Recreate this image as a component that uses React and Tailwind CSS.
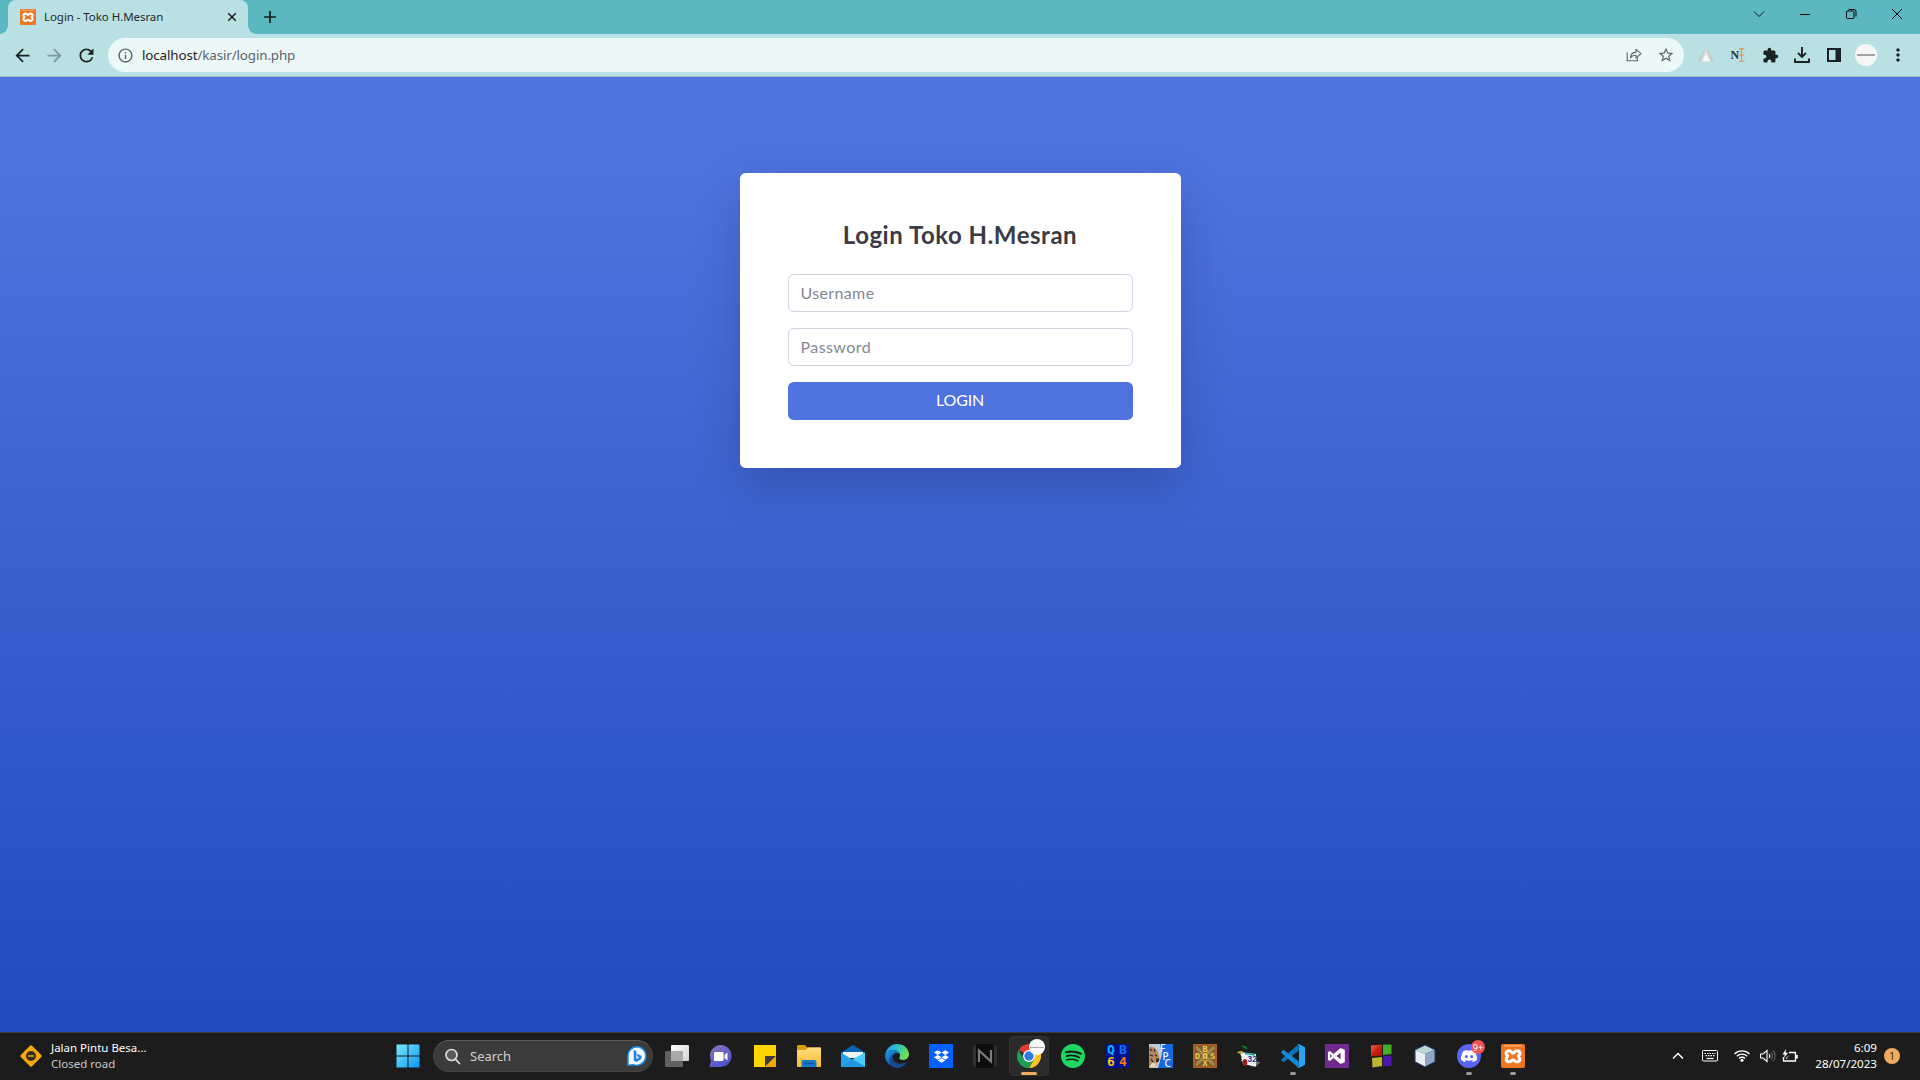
import React from "react";
import {
  MdArrowBack,
  MdArrowForward,
  MdRefresh,
  MdInfoOutline,
  MdStarBorder,
  MdExtension,
  MdMoreVert,
} from "react-icons/md";
import { SiDiscord, SiDropbox, SiSpotify } from "react-icons/si";

function Xampp({ size }) {
  return (
    <svg width={size} height={size} viewBox="0 0 24 24">
      <rect x="0" y="0" width="24" height="24" rx="2" fill="#ed7623" />
      <rect x="3" y="1.2" width="18" height="1.3" rx="0.6" fill="#fbb07a" />
      <path
        d="M8.200 6.700c-3.300 0-4.200 3-1.500 5.300-2.700 2.500-1.800 5.800 1.500 5.800 2.200 0 2.300-1.800 3.800-1.800s1.600 1.800 3.800 1.800c3.300 0 4.200-3.300 1.500-5.800 2.700-2.300 1.800-5.300-1.500-5.300-2.200 0-2.300 2.300-3.800 2.300s-1.600-2.300-3.800-2.300Z"
        fill="none"
        stroke="#fff"
        strokeWidth="3.100"
        strokeLinejoin="round"
      />
    </svg>
  );
}

function TitleBar() {
  return (
    <div className="flex h-[34px] items-stretch bg-[#5bb8c1] text-[#1b1b1b]">
      <div className="relative ml-2 flex w-60 items-center rounded-t-lg bg-[#b9e1e4] pl-3 pr-2">
        <span className="absolute -left-2 bottom-0 h-2 w-2 bg-[radial-gradient(circle_at_0_0,transparent_7.5px,#b9e1e4_8px)]" />
        <span className="absolute -right-2 bottom-0 h-2 w-2 bg-[radial-gradient(circle_at_100%_0,transparent_7.5px,#b9e1e4_8px)]" />
        <Xampp size={16} />
        <span className="ml-2 flex-1 whitespace-nowrap text-[11.5px] leading-4 tracking-[-0.06px] text-[#1f2a2c]">
          Login - Toko H.Mesran
        </span>
        <svg width="16" height="16" viewBox="0 0 16 16">
          <path d="M4.200 4.200l7.600 7.600M11.800 4.200l-7.600 7.600" stroke="currentColor" strokeWidth="1.500" />
        </svg>
      </div>
      <div className="flex w-[44px] items-center justify-center">
        <svg width="12" height="12" viewBox="0 0 12 12">
          <path d="M6 0v12M0 6h12" stroke="currentColor" strokeWidth="1.700" />
        </svg>
      </div>
      <div className="ml-auto flex h-7 text-black">
        <div className="flex w-[46px] items-center justify-center">
          <svg width="12" height="8" viewBox="0 0 12 8">
            <path d="M1 1.500l5 5 5-5" fill="none" stroke="currentColor" strokeWidth="0.900" />
          </svg>
        </div>
        <div className="flex w-[46px] items-center justify-center">
          <svg width="10" height="2" viewBox="0 0 10 2">
            <path d="M0 1.500h10" stroke="currentColor" />
          </svg>
        </div>
        <div className="flex w-[46px] items-center justify-center">
          <svg width="12" height="12" viewBox="0 0 12 12" fill="none" stroke="currentColor">
            <rect x="1.500" y="3" width="7.500" height="7.500" rx="1" />
            <path d="M3.500 1.500h5.500a2 2 0 0 1 2 2v5" />
          </svg>
        </div>
        <div className="flex w-[46px] items-center justify-center">
          <svg width="12" height="12" viewBox="0 0 12 12">
            <path d="M1 1l10 10M11 1L1 11" stroke="currentColor" strokeWidth="1" />
          </svg>
        </div>
      </div>
    </div>
  );
}

function Slot({ children }) {
  return <div className="flex w-8 shrink-0 items-center justify-center">{children}</div>;
}

function Toolbar() {
  return (
    <div className="flex h-[43px] items-center border-b border-[#9db9bd] bg-[#b9e1e4] px-1.5 text-[#1d2224]">
      <Slot><MdArrowBack size={21} /></Slot>
      <Slot><MdArrowForward size={21} className="text-[#7b979b]" /></Slot>
      <Slot><MdRefresh size={21} /></Slot>
      <div className="ml-1.5 mr-1.5 flex h-[34px] flex-1 items-center rounded-full bg-[#ecf8f8] pl-[9px] pr-0.5 text-[#5b6467]">
        <MdInfoOutline size={17} />
        <span className="ml-2 flex-1 whitespace-nowrap text-[13.4px] leading-5 tracking-[-0.13px]">
          <span className="text-[#1d2224]">localhost</span>/kasir/login.php
        </span>
        <Slot>
          <svg width="16" height="16" viewBox="0 0 16 16" fill="none" stroke="currentColor" strokeWidth="1.100">
            <path d="M1.200 5.200v8.600h10.300v-3.200" />
            <path d="M4.500 10.800c.3-3.700 2.400-5.500 5.500-5.700V2.300l5 4.400-5 4.400V8.300c-2.400 0-4.200.6-5.500 2.500Z" strokeLinejoin="round" />
          </svg>
        </Slot>
        <Slot><MdStarBorder size={18} /></Slot>
      </div>
      <Slot>
        <svg width="16" height="16" viewBox="0 0 16 16">
          <path d="M6 2.500h4L16 14.500H0Z" fill="#c5cbcd" />
          <path d="M8 5l4 9.500H4Z" fill="#f6f8f8" />
          <path d="M7.900 2l-4.500 12.500M8.100 2l4.500 12.500" stroke="#dde3e4" strokeWidth="1" />
        </svg>
      </Slot>
      <Slot>
        <svg width="16" height="16" viewBox="0 0 16 16">
          <text x="0.500" y="12" fontFamily="Liberation Serif" fontWeight="700" fontSize="12" fill="#263438">N</text>
          <path d="M9 1.500c1.500 0 2.500.4 2.500 1.500v10c0 1.100-1 1.500-2.500 1.500M14.500 1.500c-1.700 0-3 .4-3 1.500M14.500 14.500c-1.700 0-3-.4-3-1.500M9.500 8h4" fill="none" stroke="#e79a57" strokeWidth="1.300" />
        </svg>
      </Slot>
      <Slot><MdExtension size={17} /></Slot>
      <Slot>
        <svg width="16" height="16" viewBox="0 0 16 16" fill="none" stroke="currentColor" strokeWidth="1.900">
          <path d="M8 0v9.500M4 6l4 4 4-4M1 11.500V15h14v-3.500" />
        </svg>
      </Slot>
      <Slot>
        <svg width="14" height="14" viewBox="0 0 14 14">
          <rect x="1" y="1" width="12" height="12" fill="none" stroke="currentColor" strokeWidth="2" />
          <rect x="8.500" y="1" width="5" height="12" fill="currentColor" />
        </svg>
      </Slot>
      <Slot>
        <div className="flex h-[22px] w-[22px] items-center justify-center rounded-full bg-[#f7f6f7]">
          <div className="h-0.5 w-[18px] bg-[#a3a3a6]" />
        </div>
      </Slot>
      <Slot><MdMoreVert size={20} /></Slot>
    </div>
  );
}

function LoginPage() {
  return (
    <main className="flex flex-1 items-start justify-center bg-[linear-gradient(180deg,#4e73df_10%,#224abe_100%)] pt-24 font-['Lato',sans-serif]">
      <div className="w-[441px] rounded-[5.6px] bg-white p-12 shadow-[0_16px_48px_rgba(0,0,0,0.175)]">
        <h1 className="mb-[26px] whitespace-nowrap text-center text-[24px] font-bold leading-[27px] tracking-[0.52px] text-[#3a3b45]">
          Login Toko H.Mesran
        </h1>
        <div className="flex flex-col gap-4 text-base leading-6">
          <input
            type="text"
            placeholder="Username"
            className="h-[38px] rounded-[5.6px] border border-[#d1d3e2] px-3 pb-0.5 tracking-[0.36px] placeholder:text-[#858796]"
          />
          <input
            type="password"
            placeholder="Password"
            className="h-[38px] rounded-[5.6px] border border-[#d1d3e2] px-3 pb-0.5 tracking-[0.42px] placeholder:text-[#858796]"
          />
          <button className="h-[38px] rounded-[5.6px] bg-[#4e73df] pb-0.5 tracking-[-0.2px] text-white">LOGIN</button>
        </div>
      </div>
    </main>
  );
}

function Cell({ children, active, running }) {
  return (
    <div className="relative flex h-[47px] w-11 shrink-0 items-center justify-center pb-px">
      {active && (
        <div className="absolute left-0.5 top-[3px] h-10 w-10 rounded border border-[#343434] bg-[#2b2b2b]" />
      )}
      <div className="relative flex">{children}</div>
      {active && <div className="absolute bottom-[5px] left-3.5 h-[3px] w-4 rounded-full bg-[#eeac5c]" />}
      {running && <div className="absolute bottom-[5px] left-[19px] h-[3px] w-1.5 rounded-full bg-[#9a9a9a]" />}
    </div>
  );
}

function Icon({ children }) {
  return <svg className="overflow-visible" width="24" height="24" viewBox="0 0 24 24">{children}</svg>;
}

function Windows() {
  return (
    <Icon>
      <defs>
        <linearGradient id="win" x1="0" y1="0" x2="1" y2="1">
          <stop offset="0" stopColor="#7beaff" />
          <stop offset="1" stopColor="#0d97f4" />
        </linearGradient>
      </defs>
      <path d="M.5.5h11v11H.5zM12.500.5h11v11h-11zM.5 12.500h11v11H.5zM12.500 12.500h11v11h-11z" fill="url(#win)" />
    </Icon>
  );
}

function TaskView() {
  return (
    <Icon>
      <defs>
        <linearGradient id="tv" x1="0" y1="0" x2="1" y2="1">
          <stop offset="0" stopColor="#fff" />
          <stop offset="1" stopColor="#d3d3d3" />
        </linearGradient>
      </defs>
      <rect x="6" y="1" width="18" height="16" rx="1" fill="url(#tv)" />
      <rect x="0" y="7" width="18" height="16" rx="1" fill="#616161" />
      <path d="M6 7h12v10H6z" fill="#a9a9a9" />
    </Icon>
  );
}

function Chat() {
  return (
    <Icon>
      <defs>
        <linearGradient id="chat" x1="0" y1="0" x2="0.600" y2="1">
          <stop offset="0" stopColor="#a56cb4" />
          <stop offset="0.400" stopColor="#6f68c4" />
          <stop offset="1" stopColor="#4e52c9" />
        </linearGradient>
      </defs>
      <path d="M12 1a11 11 0 1 1-1 22H.5l1.500-6.200A11 11 0 0 1 12 1Z" fill="url(#chat)" />
      <rect x="5" y="8" width="9.500" height="9" rx="1" fill="#fff" />
      <path d="M15.500 11l3-2.500v8l-3-2.500z" fill="#fff" />
    </Icon>
  );
}

function StickyNotes() {
  return (
    <Icon>
      <path d="M1 1h22v22H1z" fill="#ffd500" />
      <path d="M12 12h11L12 23z" fill="#3c3c41" />
      <path d="M23 12v11H12z" fill="#eeaa00" />
    </Icon>
  );
}

function Explorer() {
  return (
    <Icon>
      <defs>
        <linearGradient id="fold" x1="0" y1="0" x2="0" y2="1">
          <stop offset="0" stopColor="#ffdd7e" />
          <stop offset="1" stopColor="#f9b92d" />
        </linearGradient>
      </defs>
      <path d="M0 2a1 1 0 0 1 1-1h7l2.500 2.500H24V10H0z" fill="#d99a09" />
      <path d="M0 6h8.500L11 3.500h12a1 1 0 0 1 1 1V22a1 1 0 0 1-1 1H1a1 1 0 0 1-1-1z" fill="url(#fold)" />
      <path d="M4.500 23v-5a2 2 0 0 1 2-2h11a2 2 0 0 1 2 2v5z" fill="#157bcc" />
      <path d="M7 19.500h10" stroke="#0c5698" strokeWidth="1.500" />
    </Icon>
  );
}

function Mail() {
  return (
    <Icon>
      <path d="M0 8.500 12 1l12 7.500V12H0z" fill="#0b62b0" />
      <path d="M2 8h20v6H2z" fill="#f0f1f2" />
      <path d="M0 8.500 12 16l12-7.500V22a1 1 0 0 1-1 1H1a1 1 0 0 1-1-1z" fill="#24a1e8" />
      <path d="M24 8.500V22.500L11 15.400z" fill="#49cdf8" />
      <path d="M0 22.500 12 15.500l12 7z" fill="#2293e0" />
    </Icon>
  );
}

function Edge() {
  return (
    <Icon>
      <defs>
        <linearGradient id="eg" x1="0" y1="0" x2="1" y2="0.300">
          <stop offset="0.200" stopColor="#28a8df" />
          <stop offset="0.600" stopColor="#35c6b8" />
          <stop offset="1" stopColor="#72e04b" />
        </linearGradient>
        <linearGradient id="eb" x1="0" y1="0" x2="0.700" y2="1">
          <stop offset="0" stopColor="#1c94dc" />
          <stop offset="1" stopColor="#0c57a4" />
        </linearGradient>
      </defs>
      <path d="M.3 10.500C1.200 4.300 6 0 12 0c7 0 12 5 12 10.300 0 3.300-2.500 5.700-5.800 5.700-2.500 0-4-.9-4-1.900 0-.7.8-1 .8-2.700C15 8.600 12.300 6 8.800 6 4.500 6 1.200 8.200.3 10.500Z" fill="url(#eg)" />
      <path d="M0 12C0 8.500 4 6 8.600 6c3.400 0 6.200 2.200 6.400 5-1-1.500-2.400-2-3.600-2-2.800 0-4.400 2.500-4.400 5.200 0 4.800 4.500 7.800 8.500 8.500A12 12 0 0 1 0 12Z" fill="url(#eb)" />
      <path d="M9.200 10.200c-3 3.300-1 8.300 4 9.300 3.300.7 6.400-.3 8.800-1.800-1.800 3.400-5.500 6.300-10 6.300-5 0-7.800-4-7.500-8 .3-3 2-5.100 4.700-5.800Z" fill="#14488f" />
    </Icon>
  );
}

function Dropbox() {
  return (
    <div className="flex h-6 w-6 items-center justify-center bg-[#0061fe] text-white">
      <SiDropbox size={15} />
    </div>
  );
}

function NIcon() {
  return (
    <Icon>
      <rect x="0" y="1" width="24" height="22" rx="3" fill="#303030" />
      <rect x="3" y="0" width="18" height="24" rx="1" fill="#0e0e0e" />
      <path d="M6 18V6.500L18 17.500V6" fill="none" stroke="#7c7c7c" strokeWidth="2.200" />
    </Icon>
  );
}

function Chrome() {
  return (
    <div className="relative">
      <Icon>
        <path d="M12 12 1.600 6A12 12 0 0 1 22.400 6z" fill="#e33b2e" />
        <path d="M12 6h10.400A12 12 0 0 1 12 24l5.200-9z" fill="#fcc31e" />
        <path d="M12 24A12 12 0 0 1 1.600 6l5.200 9L12 18l5.200-3z" fill="#1ea052" />
        <circle cx="12" cy="12" r="6" fill="#fff" />
        <circle cx="12" cy="12" r="4.700" fill="#2f7ce8" />
      </Icon>
      <div className="absolute -right-1 -top-[5px] flex h-4 w-4 items-center justify-center rounded-full bg-[#faf9fa]">
        <div className="h-px w-3.5 bg-[#aaaaaa]" />
      </div>
    </div>
  );
}

function Qb64() {
  return (
    <div className="grid h-6 w-6 grid-cols-2 grid-rows-2 place-items-center bg-[#00108c] font-['DejaVu_Sans_Mono',monospace] text-[13px] font-bold leading-[12px]">
      <span className="text-[#0ab4ff]">Q</span>
      <span className="text-[#0872f4]">B</span>
      <span className="text-[#ffbe0a]">6</span>
      <span className="text-[#ff7a0a]">4</span>
    </div>
  );
}

function Fpc() {
  return (
    <Icon>
      <rect width="24" height="24" fill="#1569e0" />
      <path d="M0 0h11l2 10-4 14H0z" fill="#c2cbd5" />
      <path d="M0 3c4-1 7 1 8.500 4.500L10.500 13 8 21l-4 3H0z" fill="#b58a60" />
      <path d="M1 5l2 2M5 5l1 3M1 11l3 1M2 15l2 3M6 11l2 1" stroke="#493525" strokeWidth="1.400" />
      <path d="M7.500 14l3 1-1.200 3H7z" fill="#33231d" />
      <path d="M3 19l5 .5-3 4H0z" fill="#eadbcb" />
      <g fontFamily="Noto Sans" fontSize="10" fontWeight="500" fill="#f5faff">
        <text x="11" y="8">F</text>
        <text x="13.500" y="15.500">P</text>
        <text x="15.500" y="23">C</text>
      </g>
    </Icon>
  );
}

function DosBox() {
  return (
    <Icon>
      <rect width="24" height="24" fill="#98511c" />
      <rect x="2.500" y="2.500" width="19" height="19" fill="#756039" />
      <path d="M3 3l18 18M21 3L3 21" stroke="#a68849" strokeWidth="3" />
      <rect x="1" y="1" width="22" height="22" fill="none" stroke="#b8692a" strokeWidth="1" />
      <g fontFamily="Liberation Mono" fontWeight="700" fontSize="8.500" fill="#f3cd43" textAnchor="middle">
        <text x="12" y="8">B</text>
        <text x="4.500" y="14.800">D</text>
        <text x="12" y="14.800">O</text>
        <text x="19.500" y="14.800">S</text>
        <text x="12" y="21.800">X</text>
      </g>
    </Icon>
  );
}

function Borland() {
  return (
    <Icon>
      <path d="M16 17l7.500 1-5 5-6-1z" fill="#68696b" />
      <path d="M3 8l16 2v12.500L6 20z" fill="#eef0f2" />
      <path d="M8 9.500l10 1.500" stroke="#13a6a6" strokeWidth="1.600" />
      <path d="M4 1.500l5 .5 2 3-4-.5z" fill="#147226" />
      <path d="M0 9c1.500-2 4-2.500 6-1.500L4.500 10z" fill="#b0aa20" />
      <ellipse cx="8" cy="18.500" rx="2.300" ry="3.500" fill="#a6151c" />
      <text x="10.500" y="18" fontFamily="Liberation Sans" fontSize="8.500" fontWeight="700" fill="#2430a0">32</text>
      <path d="M4.500 12v5M19 13v7" stroke="#9b9b9b" strokeDasharray="1 1" />
    </Icon>
  );
}

function VsCode() {
  return (
    <Icon>
      <path d="M17.500 0 0 15.500 1.300 17.600 3 18 18 6.500z" fill="#0f70b8" />
      <path d="M17.500 24 0 8.500 1.300 6.300 3 6 18 17.500z" fill="#1588d2" />
      <path d="M17.500 0 24 3v18l-6.500 3-1-1.200c1 .5 1.500 0 1.500-1V2.200c0-1-.5-1.500-1.500-1z" fill="#27a4ee" />
    </Icon>
  );
}

function VisualStudio() {
  return (
    <Icon>
      <rect width="24" height="24" fill="#702a94" />
      <path
        fillRule="evenodd"
        d="M15.600 4 19.800 5.800v12.400L15.600 20 8.500 14l-3.600 3L3 16V8l1.900-1L8.500 10zM15.600 8.700 11.400 12l4.200 3.300zM5 9.900v4.200L7 12z"
        fill="#fff"
      />
    </Icon>
  );
}

function Squares() {
  return (
    <Icon>
      <defs>
        <linearGradient id="sqr" x1="0" y1="0" x2="1" y2="1">
          <stop offset="0" stopColor="#f27158" />
          <stop offset="0.500" stopColor="#c91f12" />
          <stop offset="1" stopColor="#a81206" />
        </linearGradient>
      </defs>
      <path d="M2 1.500 13 .500v11L2 12.500z" fill="url(#sqr)" />
      <path d="M14 .500h8.500v9.500L14 11z" fill="#43ae2a" />
      <path d="M3 14l10-1v9L3.500 23.500z" fill="#bcb631" />
      <path d="M14 12.500l8.500-1v10.500L14 22z" fill="#4b17b0" />
    </Icon>
  );
}

function Cube() {
  return (
    <Icon>
      <path d="M12 .5l10.500 5V18L12 23.500 1.500 18V5.500z" fill="#20326b" />
      <path d="M12 1.500 21.500 6 12 10 2.500 6z" fill="#b8d6d4" />
      <path d="M2.500 6 12 10v12.500l-9.500-5z" fill="#e7eef3" />
      <path d="M21.500 6 12 10v12.500l9.500-5z" fill="#8fa7c4" />
    </Icon>
  );
}

function Discord() {
  return (
    <div className="relative flex h-6 w-6 items-center justify-center rounded-full bg-[#5865f2] text-white">
      <SiDiscord size={16} />
      <div className="absolute -right-1 -top-1 flex h-3.5 w-3.5 items-center justify-center rounded-full bg-[#ee5357] text-[9px] leading-none">
        9+
      </div>
    </div>
  );
}

function Bing() {
  return (
    <svg width="20" height="20" viewBox="0 0 20 20">
      <path d="M10 .7a9.300 9.300 0 1 1-4 17.900L1 19.300V10a9 9 0 0 1 9-9.300Z" fill="#f4faff" stroke="#1b8ff0" strokeWidth="1.400" />
      <path d="M6.800 4l2.500 1v8l3-1.500-1.800-1-.9-2.700 4.900 2v3L9.300 16l-2.500-1.500z" fill="#1b7fe9" />
    </svg>
  );
}

function Taskbar() {
  return (
    <footer className="flex h-12 items-center border-t border-[#3b3a3a] bg-[#1c1c1c] text-white">
      <div className="flex w-[386px] items-center pb-0.5 pl-[19px]">
        <svg width="24" height="24" viewBox="0 0 24 24">
          <rect x="4" y="4" width="16" height="16" rx="1.500" transform="rotate(45 12 12)" fill="#f9a80e" />
          <circle cx="12" cy="12" r="5" fill="#35302c" />
          <path d="M9.200 12h5.600" stroke="#f9a80e" strokeWidth="1.500" />
        </svg>
        <div className="ml-2 text-[11.5px] leading-4">
          <div>Jalan Pintu Besa...</div>
          <div className="text-[#c9c9c9]">Closed road</div>
        </div>
      </div>
      <Cell><Windows /></Cell>
      <div className="mb-px ml-[3px] mr-0.5 flex h-8 w-[220px] items-center rounded-full border border-[#454545] border-t-[#5c5c5c] bg-[#3b3b3b] pl-2.5 pr-[5px]">
        <svg width="17" height="17" viewBox="0 0 17 17" fill="none" stroke="#dcdcdc" strokeWidth="1.700">
          <circle cx="7.500" cy="7" r="5.500" fill="#5a5a5a" />
          <path d="M11.500 11.200l4 4.300" strokeLinecap="round" />
        </svg>
        <span className="ml-[9px] flex-1 text-[13px] leading-5 text-[#cfcfcf]">Search</span>
        <Bing />
      </div>
      <Cell><TaskView /></Cell>
      <Cell><Chat /></Cell>
      <Cell><StickyNotes /></Cell>
      <Cell><Explorer /></Cell>
      <Cell><Mail /></Cell>
      <Cell><Edge /></Cell>
      <Cell><Dropbox /></Cell>
      <Cell><NIcon /></Cell>
      <Cell active><Chrome /></Cell>
      <Cell><SiSpotify size={24} color="#1ed760" /></Cell>
      <Cell><Qb64 /></Cell>
      <Cell><Fpc /></Cell>
      <Cell><DosBox /></Cell>
      <Cell><Borland /></Cell>
      <Cell running><VsCode /></Cell>
      <Cell><VisualStudio /></Cell>
      <Cell><Squares /></Cell>
      <Cell><Cube /></Cell>
      <Cell running><Discord /></Cell>
      <Cell running><Xampp size={24} /></Cell>
      <div className="ml-auto flex items-center pb-0.5 pr-5">
        <Slot>
          <svg width="12" height="8" viewBox="0 0 12 8">
            <path d="M1 6.500l5-5 5 5" fill="none" stroke="#fff" strokeWidth="1.500" />
          </svg>
        </Slot>
        <Slot>
          <svg width="16" height="12" viewBox="0 0 16 12" fill="none" stroke="#fff">
            <rect x="0.500" y="0.500" width="15" height="10.500" rx="1" />
            <path d="M2.500 3.500h11M3.500 5.700h9" strokeWidth="1.200" strokeDasharray="1.500 1" />
            <path d="M4.500 8.500h7" strokeWidth="1.200" />
          </svg>
        </Slot>
        <div className="flex w-8 justify-center">
          <svg width="16" height="13" viewBox="0 0 16 13" fill="none" stroke="#fff" strokeWidth="1.300">
            <path d="M.5 5a10.600 10.600 0 0 1 15 0M2.800 7.300a7.400 7.400 0 0 1 10.400 0M5 9.500a4.200 4.200 0 0 1 6 0" />
            <circle cx="8" cy="11.300" r="1.500" fill="#fff" stroke="none" />
          </svg>
        </div>
        <div className="flex w-5 justify-center">
          <svg width="18" height="14" viewBox="0 0 18 14" fill="none" stroke="#fff" strokeWidth="1.100">
            <path d="M1.500 5h2.500l4-3.500v11L4 9H1.500z" />
            <path d="M10 5a3 3 0 0 1 0 4" />
            <path d="M12 3.200a5.500 5.500 0 0 1 0 7.600M14 1.500a8 8 0 0 1 0 11" stroke="#5e5e5e" />
          </svg>
        </div>
        <div className="ml-0.5 flex w-5 justify-center">
          <svg width="18" height="14" viewBox="0 0 18 14" fill="none" stroke="#fff" strokeWidth="1.300">
            <path d="M8 3.500h6.500v8.500H2.500V8" />
            <path d="M15.800 6v3.500" strokeWidth="2" />
            <path d="M5 0 1.500 5.500h2.300L3 9 7 3.800H4.700z" fill="#fff" stroke="none" />
            <path d="M5 10.500l3.500-4.500v0L5 9z" fill="#fff" stroke="none" />
          </svg>
        </div>
        <div className="ml-[15px] w-[62px] whitespace-nowrap text-right text-[11.6px] leading-4">
          <div>6:09</div>
          <div>28/07/2023</div>
        </div>
        <div className="ml-[7px] flex h-4 w-4 items-center justify-center rounded-full bg-[#eeac5c] text-[10px] leading-none text-[#3b2a12]">
          1
        </div>
      </div>
    </footer>
  );
}

export default function App() {
  return (
    <div className="flex h-[1080px] w-[1920px] flex-col overflow-hidden font-['Noto_Sans',sans-serif]">
      <TitleBar />
      <Toolbar />
      <LoginPage />
      <Taskbar />
    </div>
  );
}
